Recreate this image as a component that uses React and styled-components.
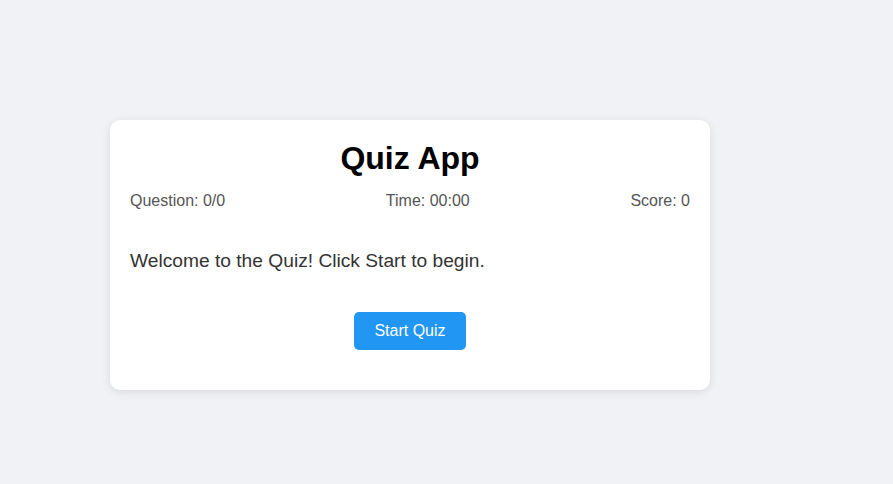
import React from "react";
import styled, { createGlobalStyle } from "styled-components";

const GlobalStyle = createGlobalStyle`
  body {
    margin: 0;
    background-color: #f0f2f5;
    font-family: "Liberation Sans", Arial, sans-serif;
  }
`;

function App() {
  return (
    <>
      <GlobalStyle />
      <Page>
        <Card>
          <Title>Quiz App</Title>
          <Info>
            <span>Question: 0/0</span>
            <span>Time: 00:00</span>
            <span>Score: 0</span>
          </Info>
          <Message>Welcome to the Quiz! Click Start to begin.</Message>
          <Actions>
            <StartButton>Start Quiz</StartButton>
          </Actions>
        </Card>
      </Page>
    </>
  );
}

export default App;

const Page = styled.div`
  min-height: 484px;
  box-sizing: border-box;
  padding: 120px 0 0 110px;
`;

const Card = styled.div`
  width: 600px;
  height: 270px;
  box-sizing: border-box;
  padding: 20px;
  background-color: #fff;
  border-radius: 10px;
  box-shadow: 0 2px 10px rgba(0, 0, 0, 0.1);
`;

const Title = styled.h1`
  margin: 0 0 15px;
  text-align: center;
  font-size: 32px;
  font-weight: bold;
  color: #000;
`;

const Info = styled.div`
  display: flex;
  justify-content: space-between;
  font-size: 16px;
  color: #555;
`;

const Message = styled.p`
  margin: 40px 0 40px;
  font-size: 19.2px;
  color: #333;
`;

const Actions = styled.div`
  display: flex;
  justify-content: center;
`;

const StartButton = styled.button`
  height: 38px;
  padding: 0 20px;
  border: none;
  border-radius: 5px;
  background-color: #2196f3;
  color: #fff;
  font-family: "Liberation Sans", Arial, sans-serif;
  font-size: 16px;
  cursor: pointer;
`;
